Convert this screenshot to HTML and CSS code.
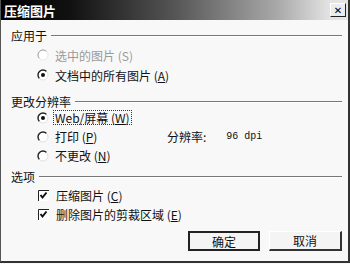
FILE: index.html
```html
<!DOCTYPE html>
<html lang="zh-CN">
	<head>
		<meta charset="UTF-8" />
		<title>压缩图片</title>
		<link rel="stylesheet" href="styles.css">
	</head>
	<body>
		<div class="dialog">
			<div class="titlebar">
				<span class="title">压缩图片</span>
				<span class="close">✕</span>
			</div>

			<div class="group first">
				<div class="head"><span>应用于</span><i></i></div>
				<div class="row disabled">
					<svg class="radio" viewBox="0 0 12 12"><circle cx="6" cy="6" r="5" fill="#fff"/><path d="M2.46 9.54A5 5 0 0 1 9.54 2.46" stroke="#999" fill="none"/><path d="M9.54 2.46A5 5 0 0 1 2.46 9.54" stroke="#e8e8e8" fill="none"/></svg>
					<span>选中的图片 (S)</span>
				</div>
				<div class="row">
					<svg class="radio" viewBox="0 0 12 12"><circle cx="6" cy="6" r="5" fill="#fff"/><path d="M2.46 9.54A5 5 0 0 1 9.54 2.46" stroke="#222" stroke-width="1.4" fill="none"/><path d="M9.54 2.46A5 5 0 0 1 2.46 9.54" stroke="#e0e0e0" fill="none"/><circle cx="6" cy="6" r="2" fill="#111"/></svg>
					<span>文档中的所有图片 (<u>A</u>)</span>
				</div>
			</div>

			<div class="group">
				<div class="head"><span>更改分辨率</span><i></i></div>
				<div class="row">
					<svg class="radio" viewBox="0 0 12 12"><circle cx="6" cy="6" r="5" fill="#fff"/><path d="M2.46 9.54A5 5 0 0 1 9.54 2.46" stroke="#222" stroke-width="1.4" fill="none"/><path d="M9.54 2.46A5 5 0 0 1 2.46 9.54" stroke="#e0e0e0" fill="none"/><circle cx="6" cy="6" r="2" fill="#111"/></svg>
					<span class="focus">Web/屏幕 (<u>W</u>)</span>
				</div>
				<div class="row">
					<svg class="radio" viewBox="0 0 12 12"><circle cx="6" cy="6" r="5" fill="#fff"/><path d="M2.46 9.54A5 5 0 0 1 9.54 2.46" stroke="#222" stroke-width="1.4" fill="none"/><path d="M9.54 2.46A5 5 0 0 1 2.46 9.54" stroke="#e0e0e0" fill="none"/></svg>
					<span class="label-w">打印 (<u>P</u>)</span>
					<span class="dpi-label">分辨率:</span>
					<span class="dpi">96 dpi</span>
				</div>
				<div class="row">
					<svg class="radio" viewBox="0 0 12 12"><circle cx="6" cy="6" r="5" fill="#fff"/><path d="M2.46 9.54A5 5 0 0 1 9.54 2.46" stroke="#222" stroke-width="1.4" fill="none"/><path d="M9.54 2.46A5 5 0 0 1 2.46 9.54" stroke="#e0e0e0" fill="none"/></svg>
					<span>不更改 (<u>N</u>)</span>
				</div>
			</div>

			<div class="group last">
				<div class="head"><span>选项</span><i></i></div>
				<div class="row check">
					<svg class="box" viewBox="0 0 11 11"><rect x="0" y="0" width="11" height="11" fill="#fff"/><path d="M0.5 11V0.5H11" stroke="#222" fill="none"/><path d="M2.5 5l2 2.5 4-5" stroke="#111" stroke-width="2" fill="none"/></svg>
					<span>压缩图片 (<u>C</u>)</span>
				</div>
				<div class="row check">
					<svg class="box" viewBox="0 0 11 11"><rect x="0" y="0" width="11" height="11" fill="#fff"/><path d="M0.5 11V0.5H11" stroke="#222" fill="none"/><path d="M2.5 5l2 2.5 4-5" stroke="#111" stroke-width="2" fill="none"/></svg>
					<span>删除图片的剪裁区域 (<u>E</u>)</span>
				</div>
			</div>

			<div class="buttons">
				<button class="default">确定</button>
				<button>取消</button>
			</div>
		</div>
	</body>
</html>
```

FILE: styles.css
```css
* {
	margin: 0;
	padding: 0;
	box-sizing: border-box;
}
body {
	width: 350px;
	height: 264px;
	background-color: #f8f8f8;
	font-family: "Noto Sans CJK SC", "DejaVu Sans", sans-serif;
	font-size: 12px;
	color: #111;
}
.dialog {
	width: 350px;
	height: 263px;
	border-left: 1px solid #555;
	border-right: 2px solid #333;
	border-bottom: 2px solid #333;
	background-color: #f8f8f8;
}
.titlebar {
	height: 20px;
	display: flex;
	justify-content: space-between;
	align-items: center;
	padding: 0 2px 0 3px;
	background: linear-gradient(to right, #000 0%, #111 20%, #555 50%, #aaa 80%, #e4e4e4 95%);
	.title {
		color: #fff;
		font-weight: bold;
		font-size: 13px;
	}
	.close {
		width: 16px;
		height: 14px;
		display: flex;
		align-items: center;
		justify-content: center;
		background-color: #ececec;
		border-top: 1px solid #fff;
		border-left: 1px solid #fff;
		border-right: 1px solid #222;
		border-bottom: 1px solid #222;
		font-size: 10px;
		font-weight: bold;
		color: #000;
		font-family: "DejaVu Sans", sans-serif;
	}
}
.group {
	margin-top: 9px;
	.head {
		display: flex;
		align-items: center;
		height: 14px;
		padding-left: 10px;
		padding-right: 6px;
		i {
			flex: 1;
			height: 2px;
			border-top: 1px solid #777;
			border-bottom: 1px solid #fff;
			margin-left: 4px;
			margin-top: 1px;
		}
	}
	.row {
		display: flex;
		align-items: center;
		height: 19px;
		padding-left: 36px;
		gap: 6px;
	}
	.row.disabled {
		color: #9a9a9a;
	}
	.check {
		padding-left: 37px;
	}
}
.group.first {
	margin-top: 8px;
	.head {
		margin-bottom: 3px;
	}
	.row {
		height: 20px;
	}
}
.group.last {
	margin-top: 4px;
	.head {
		margin-bottom: 3px;
	}
}
.radio {
	width: 12px;
	height: 12px;
	flex: none;
}
.box {
	width: 11px;
	height: 11px;
	flex: none;
	margin-right: 1px;
}
.focus {
	border: 1px dotted #333;
	padding: 0 1px;
	margin-left: -2px;
	line-height: 13px;
}
.label-w {
	width: 106px;
}
.dpi {
	margin-left: 14px;
	font-family: "Liberation Mono", monospace;
	font-size: 10px;
}
.buttons {
	display: flex;
	justify-content: flex-end;
	gap: 9px;
	padding-right: 6px;
	margin-top: 7px;
	button {
		width: 73px;
		height: 20px;
		font-family: "Noto Sans CJK SC", sans-serif;
		font-size: 12px;
		color: #111;
		background-color: #f4f4f4;
		border-top: 1px solid #fff;
		border-left: 1px solid #fff;
		border-right: 2px solid #333;
		border-bottom: 2px solid #333;
	}
	.default {
		width: 72px;
		border: 2px solid #222;
	}
}
```
